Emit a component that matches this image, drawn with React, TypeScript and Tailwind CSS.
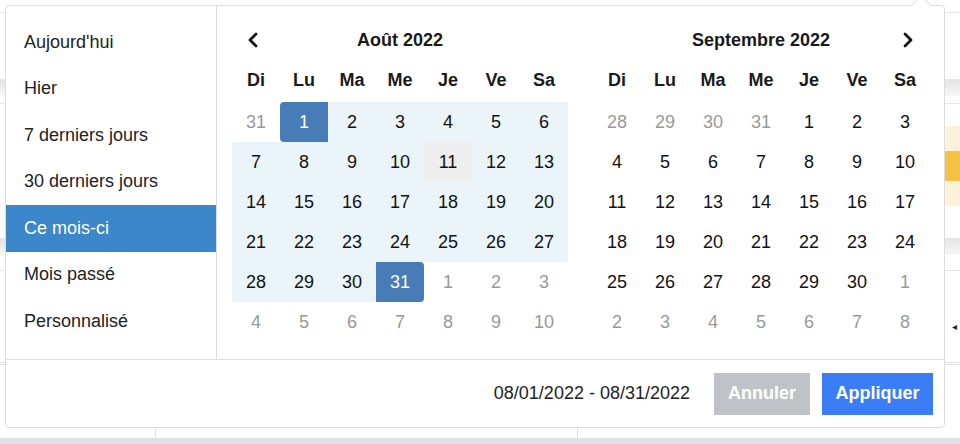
import React from "react";

type Cell = { d: number; off?: boolean; inRange?: boolean; start?: boolean; end?: boolean; today?: boolean };

const headers = ["Di", "Lu", "Ma", "Me", "Je", "Ve", "Sa"];

function buildAug(): Cell[] {
  const cells: Cell[] = [{ d: 31, off: true }];
  for (let i = 1; i <= 31; i++) {
    cells.push({ d: i, inRange: true, start: i === 1, end: i === 31, today: i === 11 });
  }
  for (let i = 1; i <= 10; i++) cells.push({ d: i, off: true });
  return cells;
}

function buildSep(): Cell[] {
  const cells: Cell[] = [28, 29, 30, 31].map((d) => ({ d, off: true }));
  for (let i = 1; i <= 30; i++) cells.push({ d: i });
  for (let i = 1; i <= 8; i++) cells.push({ d: i, off: true });
  return cells;
}

function Chevron({ dir }: { dir: "left" | "right" }) {
  return (
    <svg width="12" height="16" viewBox="0 0 12 16" fill="none">
      <path
        d={dir === "left" ? "M9 2 L3 8 L9 14" : "M3 2 L9 8 L3 14"}
        stroke="#111"
        strokeWidth="2.8"
        strokeLinecap="round"
        strokeLinejoin="round"
      />
    </svg>
  );
}

function Calendar({ title, cells, prev, next }: { title: string; cells: Cell[]; prev?: boolean; next?: boolean }) {
  return (
    <div className="w-[336px]">
      <div className="grid h-[40px] grid-cols-7 items-center">
        <div className="flex justify-center -translate-x-[3px]">{prev && <Chevron dir="left" />}</div>
        <div className="col-span-5 text-center text-[18px] font-bold text-[#1a1a1a]">{title}</div>
        <div className="flex justify-center translate-x-[3px]">{next && <Chevron dir="right" />}</div>
      </div>
      <div className="grid h-[41px] grid-cols-7 items-center">
        {headers.map((h) => (
          <div key={h} className="text-center text-[18px] font-bold text-[#1a1a1a]">
            {h}
          </div>
        ))}
      </div>
      <div className="mt-[1px] grid grid-cols-7">
        {cells.map((c, i) => {
          let cls = "flex h-[40px] w-[48px] items-center justify-center text-[18px] ";
          if (c.start || c.end) {
            cls += "bg-[#487cb6] text-white ";
            if (c.start) cls += "rounded-l-[4px] ";
            if (c.end) cls += "rounded-r-[4px] ";
          } else if (c.today) {
            cls += "bg-[#eeeeee] text-[#111] ";
          } else if (c.inRange) {
            cls += "bg-[#ebf4f8] text-[#111] ";
          } else if (c.off) {
            cls += "text-[#999999] ";
          } else {
            cls += "text-[#111] ";
          }
          return (
            <div key={i} className={cls}>
              {c.d}
            </div>
          );
        })}
      </div>
    </div>
  );
}

const ranges = ["Aujourd'hui", "Hier", "7 derniers jours", "30 derniers jours", "Ce mois-ci", "Mois passé", "Personnalisé"];

export default function App() {
  return (
    <div className="relative h-[444px] w-[960px] overflow-hidden bg-white font-['Liberation_Sans',Arial,sans-serif]">
      {/* page behind */}
      <div className="flex h-[444px] flex-col">
        <div className="h-[13px] border-b border-[#e6e6e6]" />
        <div className="h-[66px]" />
        <div className="h-[17px] bg-gradient-to-b from-[#e4e4e4] to-[#f6f6f6]" />
        <div className="h-[8px] border-b border-[#e6e6e6]" />
        <div className="flex h-[134px] items-start justify-end pt-[22px]">
          <div className="flex h-[80px] w-[50px] items-center rounded-l-full bg-[#fdf1da]">
            <div className="h-[30px] w-full bg-[#f5c244]" />
          </div>
        </div>
        <div className="h-[17px] bg-gradient-to-b from-[#e4e4e4] to-[#f6f6f6]" />
        <div className="h-[16px] border-b border-[#e6e6e6]" />
        <div className="flex h-[91px] items-start justify-end pr-[3px] pt-[51px]">
          <span className="text-[10px] leading-none text-[#222]">◂</span>
        </div>
        <div className="h-[3px] border-y border-[#e0e0e0]" />
        <div className="flex-1" />
        <div className="flex h-[11px]">
          <div className="w-[156px] border-r border-[#e0e0e0]" />
          <div className="w-[422px] border-r border-[#e0e0e0]" />
        </div>
        <div className="h-[6px] bg-[#dee2e6]" />
      </div>

      {/* popup */}
      <div className="absolute left-[5px] top-[5px] flex h-[423px] w-[940px] flex-col rounded-[4px] border border-[#dddddd] bg-white">
        <div className="absolute -top-[8px] left-[908px] h-[14px] w-[14px] rotate-45 border-l border-t border-[#dddddd] bg-white" />
        <div className="relative flex h-[354px] border-b border-[#dddddd]">
          <ul className="w-[211px] border-r border-[#dddddd] pt-[13px]">
            {ranges.map((r) => (
              <li
                key={r}
                className={
                  "flex h-[46.5px] items-center pl-[18px] text-[18px] " +
                  (r === "Ce mois-ci" ? "bg-[#3b87c9] text-white" : "text-[#222]")
                }
              >
                {r}
              </li>
            ))}
          </ul>
          <div className="flex gap-[25px] pl-[15px] pt-[14px]">
            <Calendar title="Août 2022" cells={buildAug()} prev />
            <Calendar title="Septembre 2022" cells={buildSep()} next />
          </div>
        </div>
        <div className="flex flex-1 items-center justify-end pr-[11px]">
          <span className="mr-[24px] text-[18px] text-[#222]">08/01/2022 - 08/31/2022</span>
          <button className="mr-[12px] h-[42px] w-[96px] bg-[#bfc3c7] text-[18px] font-bold text-white">Annuler</button>
          <button className="h-[42px] w-[111px] bg-[#3a7df5] text-[18px] font-bold text-white">Appliquer</button>
        </div>
      </div>
    </div>
  );
}
